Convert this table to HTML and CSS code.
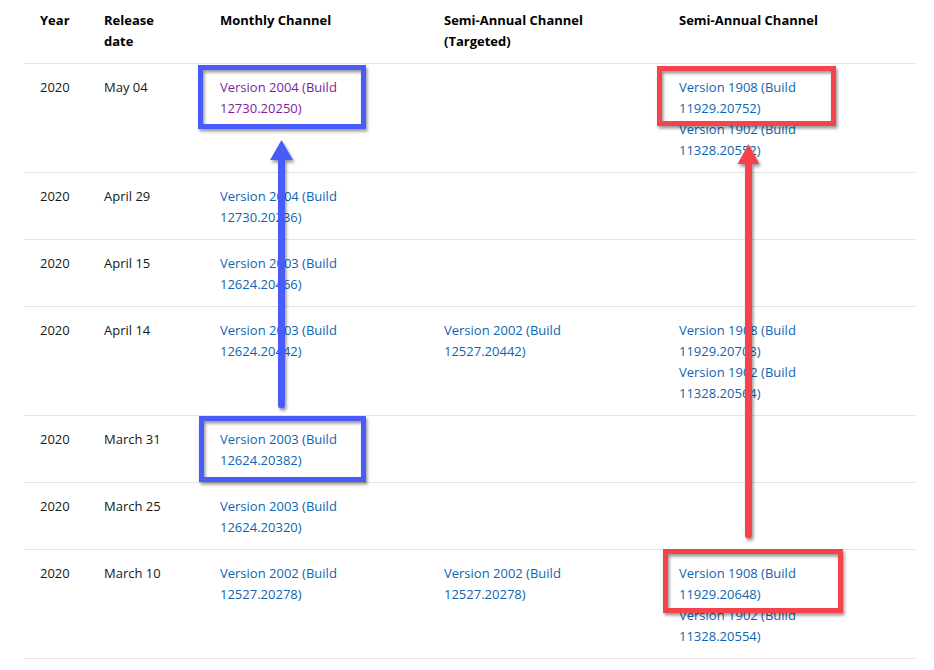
FILE: index.html
```html
<!DOCTYPE html>
<html lang="en">
<head>
<meta charset="utf-8">
<title>Release history</title>
<link rel="stylesheet" href="styles.css">
</head>
<body>
<div class="page">
  <table class="releases">
    <colgroup>
      <col class="c-year"><col class="c-date"><col class="c-month"><col class="c-sat"><col class="c-sa">
    </colgroup>
    <thead>
      <tr>
        <th>Year</th>
        <th>Release date</th>
        <th>Monthly Channel</th>
        <th>Semi-Annual Channel (Targeted)</th>
        <th>Semi-Annual Channel</th>
      </tr>
    </thead>
    <tbody>
      <tr>
        <td>2020</td><td>May 04</td>
        <td><a class="ver visited" href="#"><span>Version 2004 (Build</span><span>12730.20250)</span></a></td>
        <td></td>
        <td><a class="ver" href="#"><span>Version 1908 (Build</span><span>11929.20752)</span></a><a class="ver" href="#"><span>Version 1902 (Build</span><span>11328.20552)</span></a></td>
      </tr>
      <tr>
        <td>2020</td><td>April 29</td>
        <td><a class="ver" href="#"><span>Version 2004 (Build</span><span>12730.20236)</span></a></td>
        <td></td><td></td>
      </tr>
      <tr>
        <td>2020</td><td>April 15</td>
        <td><a class="ver" href="#"><span>Version 2003 (Build</span><span>12624.20466)</span></a></td>
        <td></td><td></td>
      </tr>
      <tr>
        <td>2020</td><td>April 14</td>
        <td><a class="ver" href="#"><span>Version 2003 (Build</span><span>12624.20442)</span></a></td>
        <td><a class="ver" href="#"><span>Version 2002 (Build</span><span>12527.20442)</span></a></td>
        <td><a class="ver" href="#"><span>Version 1908 (Build</span><span>11929.20708)</span></a><a class="ver" href="#"><span>Version 1902 (Build</span><span>11328.20564)</span></a></td>
      </tr>
      <tr>
        <td>2020</td><td>March 31</td>
        <td><a class="ver" href="#"><span>Version 2003 (Build</span><span>12624.20382)</span></a></td>
        <td></td><td></td>
      </tr>
      <tr>
        <td>2020</td><td>March 25</td>
        <td><a class="ver" href="#"><span>Version 2003 (Build</span><span>12624.20320)</span></a></td>
        <td></td><td></td>
      </tr>
      <tr>
        <td>2020</td><td>March 10</td>
        <td><a class="ver" href="#"><span>Version 2002 (Build</span><span>12527.20278)</span></a></td>
        <td><a class="ver" href="#"><span>Version 2002 (Build</span><span>12527.20278)</span></a></td>
        <td><a class="ver" href="#"><span>Version 1908 (Build</span><span>11929.20648)</span></a><a class="ver" href="#"><span>Version 1902 (Build</span><span>11328.20554)</span></a></td>
      </tr>
    </tbody>
  </table>

  <svg class="annotations" width="934" height="670" viewBox="0 0 934 670" aria-hidden="true">
    <defs>
      <filter id="sh" x="-10%" y="-10%" width="130%" height="130%">
        <feDropShadow dx="1.5" dy="2.5" stdDeviation="1.8" flood-color="#000" flood-opacity="0.4"/>
      </filter>
    </defs>
    <g filter="url(#sh)">
      <rect x="200.5" y="67.5" width="163" height="59" fill="none" stroke="#4a5cfa" stroke-width="5"/>
      <rect x="201.5" y="418.5" width="162" height="61" fill="none" stroke="#4a5cfa" stroke-width="5"/>
      <line x1="281.5" y1="156" x2="281.5" y2="405" stroke="#4a5cfa" stroke-width="7" stroke-linecap="round"/>
      <polygon points="281.5,140 270,160 293,160" fill="#4a5cfa"/>
      <rect x="659.5" y="68.5" width="174" height="55" fill="none" stroke="#f5434b" stroke-width="5"/>
      <rect x="665.5" y="551.5" width="175" height="59" fill="none" stroke="#f5434b" stroke-width="5"/>
      <line x1="748.5" y1="160" x2="748.5" y2="535" stroke="#f5434b" stroke-width="7" stroke-linecap="round"/>
      <polygon points="748.5,144 737.5,164 759.5,164" fill="#f5434b"/>
    </g>
  </svg>
</div>
</body>
</html>
```
FILE: styles.css
```css
html, body {
  margin: 0;
  padding: 0;
  background: #ffffff;
}

body {
  font-family: "Open Sans", "Noto Sans", "Liberation Sans", sans-serif;
  font-size: 13px;
  color: #171717;
}

.page {
  position: relative;
  width: 934px;
  height: 670px;
  overflow: hidden;
}

.releases {
  margin-left: 24px;
  width: 891px;
  border-collapse: collapse;
  table-layout: fixed;
}

.c-year { width: 64px; }
.c-date { width: 116px; }
.c-month { width: 224px; }
.c-sat { width: 235px; }
.c-sa { width: 252px; }

.releases th {
  text-align: left;
  vertical-align: top;
  font-weight: 700;
  line-height: 21px;
  padding: 10px 16px 11px 16px;
  border-bottom: 1px solid #e3e3e3;
  color: #000;
}

.releases th:nth-child(2) { padding-right: 40px; }
.releases th:nth-child(4) { padding-right: 50px; }

.releases td {
  vertical-align: top;
  line-height: 21px;
  padding: 13px 16px 11px 16px;
  border-bottom: 1px solid #e3e3e3;
}

.ver {
  display: block;
  color: #0e65b2;
  text-decoration: none;
}

.ver span {
  display: block;
  white-space: nowrap;
}

.ver.visited {
  color: #7f1d98;
}

.annotations {
  position: absolute;
  left: 0;
  top: 0;
  pointer-events: none;
}
```
